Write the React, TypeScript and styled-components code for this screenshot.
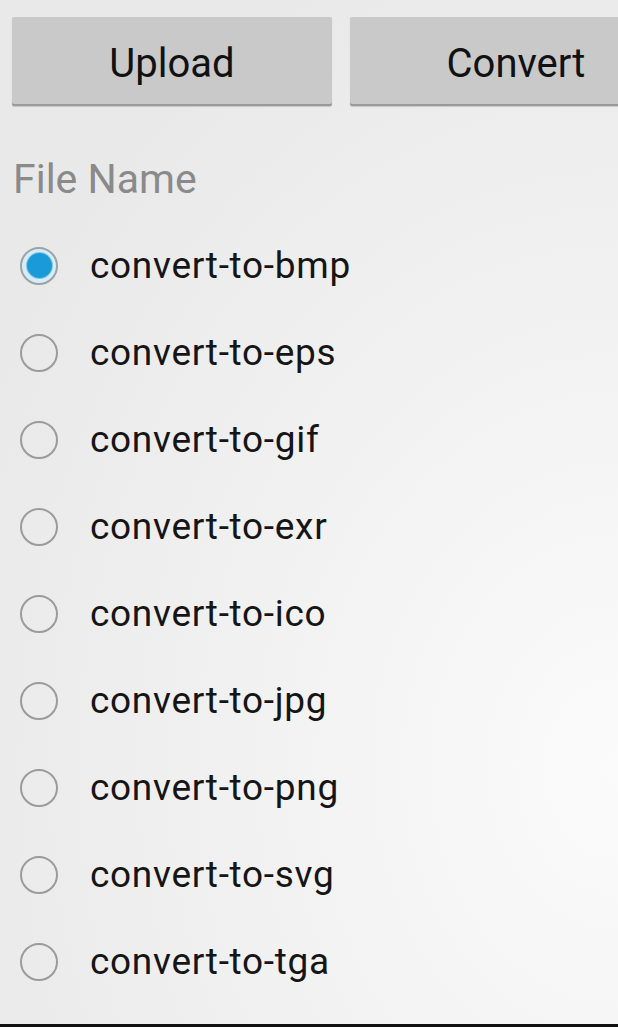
import React, { useState } from "react";
import styled, { createGlobalStyle } from "styled-components";

const GlobalStyle = createGlobalStyle`
  html, body {
    margin: 0;
    padding: 0;
    height: 100%;
    overflow: hidden;
  }
  #root {
    height: 100%;
  }
`;

const formats = ["bmp", "eps", "gif", "exr", "ico", "jpg", "png", "svg", "tga"];

const Screen = styled.div`
  width: 618px;
  height: 1027px;
  box-sizing: border-box;
  overflow: hidden;
  font-family: Roboto, "Noto Sans", sans-serif;
  background: radial-gradient(
    ellipse at 100% 75%,
    #fbfbfb 0%,
    #f3f3f3 35%,
    #e9e9e9 80%
  );
  border-bottom: 3px solid #111;
  padding: 17px 0 0 12px;
`;

const Toolbar = styled.div`
  display: flex;
  gap: 18px;
  width: 700px;
`;

const Button = styled.button<{ $width: number }>`
  width: ${(p) => p.$width}px;
  height: 89px;
  flex: none;
  border: none;
  border-radius: 2px;
  background: #c9c9c9;
  box-shadow: inset 0 -2px 0 #9a9a9a, 0 1px 1px rgba(0, 0, 0, 0.15);
  font-family: Roboto, "Noto Sans", sans-serif;
  font-size: 40px;
  color: #111;
  padding: 4px 0 0;
  cursor: pointer;
`;

const Label = styled.div`
  font-size: 41px;
  color: #8a8a8a;
  margin: 51px 0 0 1px;
  line-height: 44px;
`;

const List = styled.div`
  display: flex;
  flex-direction: column;
  margin-top: 21px;
`;

const Row = styled.label`
  display: flex;
  align-items: center;
  height: 87px;
  gap: 32px;
  padding-left: 8px;
  cursor: pointer;
`;

const Circle = styled.span<{ $checked: boolean }>`
  width: 38px;
  height: 38px;
  box-sizing: border-box;
  border-radius: 50%;
  border: 2px solid ${(p) => (p.$checked ? "#9aa3a8" : "#9b9b9b")};
  background: ${(p) => (p.$checked ? "#d6ecf6" : "transparent")};
  display: flex;
  align-items: center;
  justify-content: center;
  flex: none;
`;

const Dot = styled.span`
  width: 25px;
  height: 25px;
  border-radius: 50%;
  background: #1a9bd7;
  box-shadow: 0 0 0 1px #7fc6e8;
`;

const Text = styled.span`
  font-size: 37px;
  color: #151515;
  letter-spacing: 0.7px;
`;

export default function App() {
  const [selected, setSelected] = useState("bmp");
  return (
    <>
      <GlobalStyle />
      <Screen>
        <Toolbar>
          <Button $width={320}>Upload</Button>
          <Button $width={332}>Convert</Button>
        </Toolbar>
        <Label>File Name</Label>
        <List>
          {formats.map((f) => (
            <Row key={f} onClick={() => setSelected(f)}>
              <Circle $checked={selected === f}>{selected === f && <Dot />}</Circle>
              <Text>convert-to-{f}</Text>
            </Row>
          ))}
        </List>
      </Screen>
    </>
  );
}
